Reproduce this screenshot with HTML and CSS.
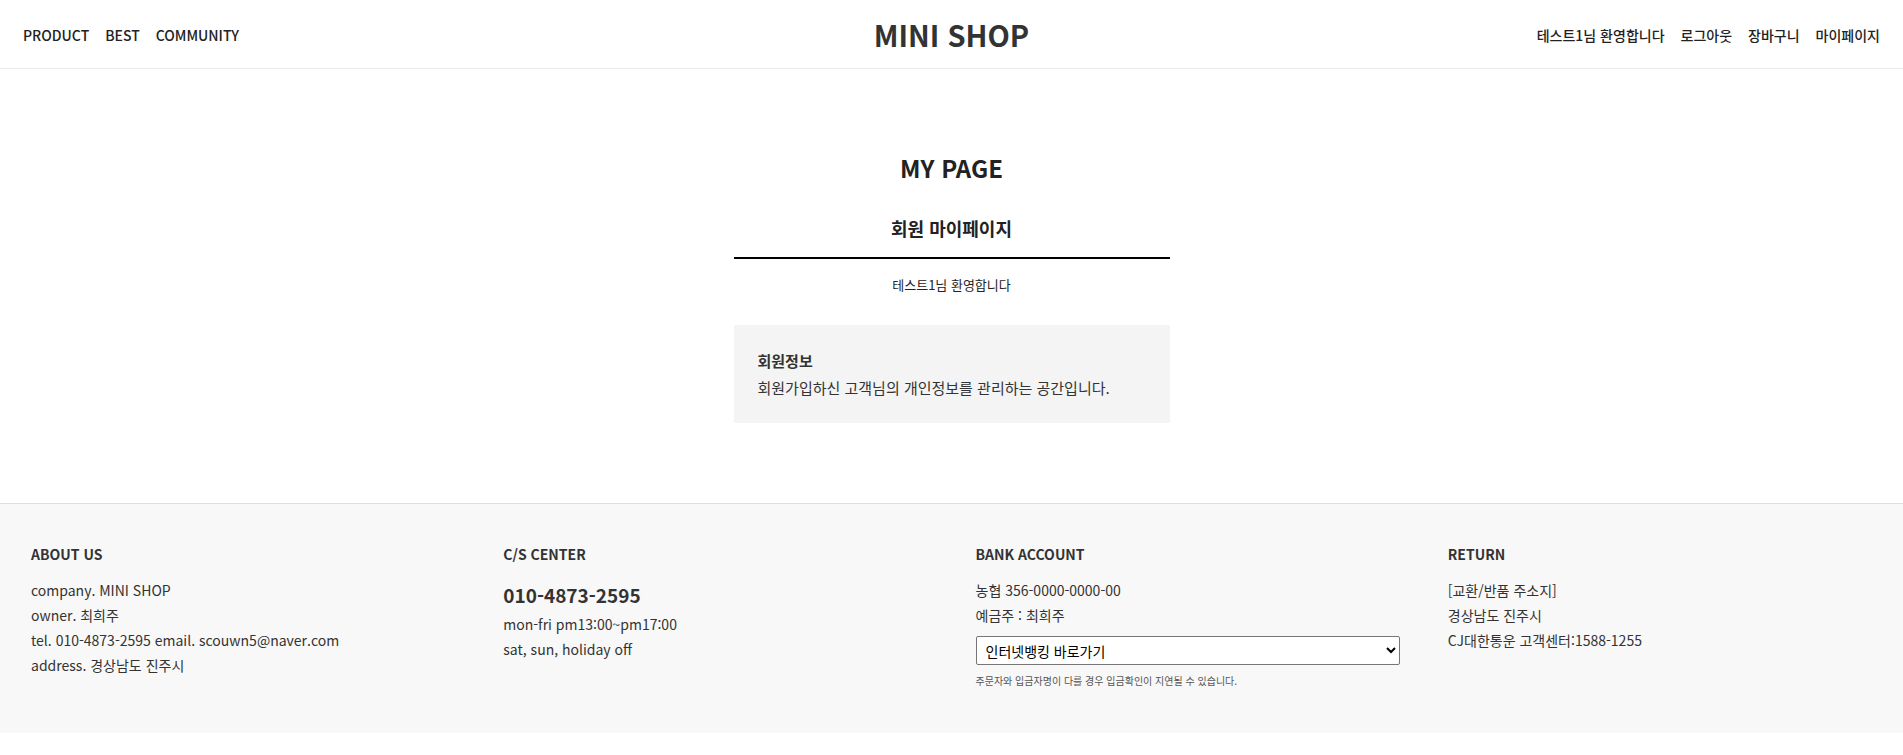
FILE: index.html
```html
<!DOCTYPE html>
<html lang="ko">
<head>
<meta charset="utf-8">
<meta name="viewport" content="width=device-width, initial-scale=1">
<title>MINI SHOP</title>
<link rel="stylesheet" href="styles.css">
</head>
<body>
<header class="header">
  <nav class="menu">
    <a href="#">PRODUCT</a>
    <a href="#">BEST</a>
    <a href="#">COMMUNITY</a>
  </nav>
  <h1 class="logo"><a href="#">MINI SHOP</a></h1>
  <div class="menu menu-user">
    <span>테스트1님 환영합니다</span>
    <a href="#">로그아웃</a>
    <a href="#">장바구니</a>
    <a href="#">마이페이지</a>
  </div>
</header>
<main class="mypage">
  <h2 class="page-title">MY PAGE</h2>
  <h3 class="sub-title">회원 마이페이지</h3>
  <p class="welcome">테스트1님 환영합니다</p>
  <a class="info-box" href="#">
    <strong class="info-title">회원정보</strong>
    <span class="info-text">회원가입하신 고객님의 개인정보를 관리하는 공간입니다.</span>
  </a>
</main>
<footer class="footer">
  <section>
    <h4 class="footer-title">ABOUT US</h4>
    <p>company. MINI SHOP</p>
    <p>owner. 최희주</p>
    <p>tel. 010-4873-2595 email. scouwn5@naver.com</p>
    <p>address. 경상남도 진주시</p>
  </section>
  <section>
    <h4 class="footer-title">C/S CENTER</h4>
    <p class="phone">010-4873-2595</p>
    <p>mon-fri pm13:00~pm17:00</p>
    <p>sat, sun, holiday off</p>
  </section>
  <section>
    <h4 class="footer-title">BANK ACCOUNT</h4>
    <p>농협 356-0000-0000-00</p>
    <p>예금주 : 최희주</p>
    <select class="bank" aria-label="인터넷뱅킹 바로가기">
      <option>인터넷뱅킹 바로가기</option>
    </select>
    <p class="note">주문자와 입금자명이 다를 경우 입금확인이 지연될 수 있습니다.</p>
  </section>
  <section>
    <h4 class="footer-title">RETURN</h4>
    <p>[교환/반품 주소지]</p>
    <p>경상남도 진주시</p>
    <p>CJ대한통운 고객센터:1588-1255</p>
  </section>
</footer>
</body>
</html>
```
FILE: styles.css
```css
* {
  box-sizing: border-box;
  margin: 0;
  padding: 0;
}

body {
  background: #fff;
  color: #222;
  font-family: "Noto Sans CJK KR", sans-serif;
  font-size: 14px;
  line-height: 24px;
}

a {
  color: inherit;
  text-decoration: none;
}

.header {
  display: grid;
  grid-template-columns: 1fr auto 1fr;
  align-items: center;
  padding: 12px 23px;
  border-bottom: 1px solid #eaeaea;
}

.menu {
  display: flex;
  gap: 16px;
  padding-top: 2px;
  font-weight: 500;
}

.menu-user {
  justify-content: flex-end;
}

.logo {
  color: #333;
  font-size: 29px;
  font-weight: 700;
  line-height: 44px;
}

.mypage {
  width: 436px;
  max-width: 100%;
  margin: 0 auto;
  padding: 80px 0;
  text-align: center;
}

.page-title {
  margin-bottom: 24px;
  font-size: 24px;
  font-weight: 700;
  line-height: 38px;
}

.sub-title {
  padding-bottom: 12px;
  border-bottom: 2px solid #000;
  font-size: 18px;
  font-weight: 700;
  line-height: 34px;
}

.welcome {
  margin: 14px 0 28px;
  font-size: 13px;
}

.info-box {
  display: block;
  padding: 22px 24px;
  background: #f4f4f4;
  color: #333;
  font-size: 15px;
  line-height: 27px;
  text-align: left;
}

.info-title,
.info-text {
  display: block;
}

.footer {
  display: grid;
  grid-template-columns: repeat(4, 1fr);
  gap: 48px;
  padding: 38px 31px 44px;
  border-top: 1px solid #ddd;
  background: #f8f8f8;
  color: #333;
  line-height: 25px;
}

.footer-title {
  margin-bottom: 12px;
  font-size: 14px;
  font-weight: 700;
  line-height: 24px;
}

.phone {
  font-size: 19px;
  font-weight: 700;
  line-height: 34px;
}

.bank {
  display: block;
  width: 100%;
  height: 29px;
  margin: 8px 0;
  padding: 0 5px;
  border: 1px solid #767676;
  border-radius: 2px;
  background-color: #fff;
  color: #000;
  font-family: inherit;
  font-size: 14px;
}

.note {
  color: #555;
  font-size: 10px;
  line-height: 16px;
}
```
